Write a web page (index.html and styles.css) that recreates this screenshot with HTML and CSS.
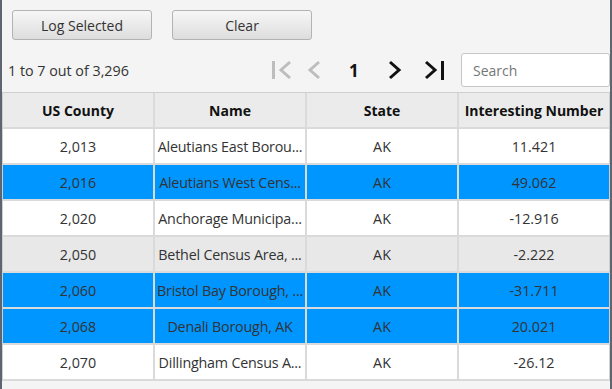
FILE: index.html
```html
<!DOCTYPE html>
<html lang="en">
<head>
  <meta charset="UTF-8" />
  <title>County Table</title>
  <link rel="stylesheet" href="styles.css">
</head>
<body>
  <div class="window">
    <div class="toolbar">
      <button class="btn">Log Selected</button>
      <button class="btn">Clear</button>
    </div>

    <div class="pager-bar">
      <span class="count">1 to 7 out of 3,296</span>
      <div class="pager">
        <svg class="pg first off" width="20" height="20" viewBox="0 0 20 20">
          <rect x="1" y="1" width="3" height="18" />
          <polyline points="19,2 10,10 19,18" />
        </svg>
        <svg class="pg prev off" width="14" height="20" viewBox="0 0 14 20">
          <polyline points="12,2 3,10 12,18" />
        </svg>
        <span class="page">1</span>
        <svg class="pg next" width="14" height="20" viewBox="0 0 14 20">
          <polyline points="2,2 11,10 2,18" />
        </svg>
        <svg class="pg last" width="22" height="20" viewBox="0 0 22 20">
          <polyline points="2,2 11,10 2,18" />
          <rect x="17" y="1" width="3" height="19" />
        </svg>
      </div>
      <input class="search" type="text" placeholder="Search">
    </div>

    <div class="table">
      <div class="row head">
        <div class="cell">US County</div>
        <div class="cell">Name</div>
        <div class="cell">State</div>
        <div class="cell">Interesting Number</div>
      </div>
      <div class="row">
        <div class="cell">2,013</div>
        <div class="cell">Aleutians East Borou...</div>
        <div class="cell">AK</div>
        <div class="cell">11.421</div>
      </div>
      <div class="row selected">
        <div class="cell">2,016</div>
        <div class="cell">Aleutians West Cens...</div>
        <div class="cell">AK</div>
        <div class="cell">49.062</div>
      </div>
      <div class="row">
        <div class="cell">2,020</div>
        <div class="cell">Anchorage Municipa...</div>
        <div class="cell">AK</div>
        <div class="cell">-12.916</div>
      </div>
      <div class="row hover">
        <div class="cell">2,050</div>
        <div class="cell">Bethel Census Area, ...</div>
        <div class="cell">AK</div>
        <div class="cell">-2.222</div>
      </div>
      <div class="row selected">
        <div class="cell">2,060</div>
        <div class="cell">Bristol Bay Borough, ...</div>
        <div class="cell">AK</div>
        <div class="cell">-31.711</div>
      </div>
      <div class="row selected">
        <div class="cell">2,068</div>
        <div class="cell">Denali Borough, AK</div>
        <div class="cell">AK</div>
        <div class="cell">20.021</div>
      </div>
      <div class="row">
        <div class="cell">2,070</div>
        <div class="cell">Dillingham Census A...</div>
        <div class="cell">AK</div>
        <div class="cell">-26.12</div>
      </div>
    </div>
  </div>
</body>
</html>
```

FILE: styles.css
```css
* {
  box-sizing: border-box;
}

body {
  margin: 0;
  font-family: 'Open Sans', 'Noto Sans', sans-serif;
  font-size: 14px;
  color: #333;
  background: #f4f4f4;
}

.window {
  width: 612px;
  height: 389px;
  background: #f4f4f4;
  border-left: 2px solid #5d6670;
  border-right: 2px solid #5d6670;
  overflow: hidden;
}

.toolbar {
  display: flex;
  gap: 20px;
  padding: 10px 0 0 10px;
}

.btn {
  width: 140px;
  height: 30px;
  font-family: inherit;
  font-size: 14px;
  color: #333;
  background: linear-gradient(#f7f7f7, #dddddd);
  border: 1px solid #b3b3b3;
  border-radius: 3px;
  padding: 0;
}

.pager-bar {
  display: flex;
  align-items: center;
  height: 34px;
  margin-top: 13px;
}

.count {
  padding-left: 6px;
  font-size: 14.3px;
}

.pager {
  display: flex;
  align-items: center;
  margin-left: auto;
  margin-right: 15px;
}

.pg {
  display: block;
  fill: #111;
  stroke: #111;
}

.pg rect {
  stroke: none;
}

.pg polyline {
  fill: none;
  stroke-width: 3;
}

.pg.off {
  fill: #bdbdbd;
  stroke: #bdbdbd;
}

.prev {
  margin-left: 16px;
}

.page {
  margin-left: 28px;
  width: 12px;
  font-weight: bold;
  font-size: 17px;
  color: #111;
}

.next {
  margin-left: 27px;
}

.last {
  margin-left: 22px;
}

.search {
  width: 149px;
  height: 34px;
  font-family: inherit;
  font-size: 14px;
  padding: 0 11px;
  border: 1px solid #c6c6c6;
  border-radius: 3px;
  background: #fff;
  color: #333;
}

.search::placeholder {
  color: #777;
}

.table {
  margin-top: 5px;
  border: 1px solid #cfcfcf;
  border-bottom: none;
  background: #fff;
}

.row {
  display: grid;
  grid-template-columns: 152px 152px 152px 1fr;
  height: 36px;
  border-bottom: 2px solid #dadada;
  background: #fff;
}

.cell {
  display: flex;
  align-items: center;
  justify-content: center;
  padding: 0 2px;
  border-right: 2px solid #dadada;
  white-space: nowrap;
  overflow: hidden;
  font-size: 14.3px;
}

.cell:nth-child(2) {
  letter-spacing: -0.2px;
}

.cell:last-child {
  border-right: none;
}

.head {
  background: #ebebeb;
  font-weight: bold;
  color: #111;
}

.head .cell {
  font-size: 14px;
  letter-spacing: 0;
}

.selected {
  background: #0096ff;
}

.hover {
  background: #e8e8e8;
}
```
